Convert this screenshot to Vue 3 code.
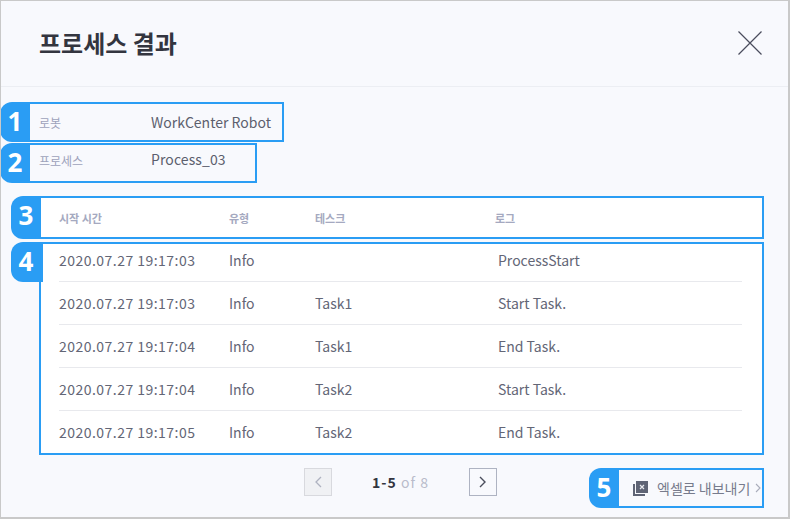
<script setup>
const rows = [
  { time: '2020.07.27 19:17:03', type: 'Info', task: '', log: 'ProcessStart' },
  { time: '2020.07.27 19:17:03', type: 'Info', task: 'Task1', log: 'Start Task.' },
  { time: '2020.07.27 19:17:04', type: 'Info', task: 'Task1', log: 'End Task.' },
  { time: '2020.07.27 19:17:04', type: 'Info', task: 'Task2', log: 'Start Task.' },
  { time: '2020.07.27 19:17:05', type: 'Info', task: 'Task2', log: 'End Task.' }
]
</script>

<template>
  <div class="dialog">
    <header class="head">
      <h1>프로세스 결과</h1>
      <svg class="close" width="24" height="24" viewBox="0 0 24 24">
        <path d="M0.5 0.5L23.5 23.5M23.5 0.5L0.5 23.5" stroke="#4a4d5c" stroke-width="1.2" fill="none" />
      </svg>
    </header>
    <section class="info">
      <div class="info-row first">
        <span class="badge">1</span>
        <span class="label">로봇</span>
        <span class="value">WorkCenter Robot</span>
      </div>
      <div class="info-row second">
        <span class="badge">2</span>
        <span class="label up">프로세스</span>
        <span class="value up">Process_03</span>
      </div>
    </section>
    <section class="table">
      <div class="thead">
        <span class="badge">3</span>
        <div class="cols">
          <span>시작 시간</span><span>유형</span><span>테스크</span><span>로그</span>
        </div>
      </div>
      <div class="tbody">
        <span class="badge over">4</span>
        <div v-for="(r, i) in rows" :key="i" class="row">
          <span class="time">{{ r.time }}</span><span>{{ r.type }}</span><span>{{ r.task }}</span><span class="log">{{ r.log }}</span>
        </div>
      </div>
    </section>
    <footer class="foot">
      <div class="pager">
        <button class="page off">
          <svg width="8" height="12" viewBox="0 0 8 12"><path d="M7 1L2 6l5 5" fill="none" stroke="#aeb2c0" stroke-width="1.3" /></svg>
        </button>
        <span class="count"><b>1-5</b> of 8</span>
        <button class="page">
          <svg width="8" height="12" viewBox="0 0 8 12"><path d="M1 1l5 5-5 5" fill="none" stroke="#4a4d5c" stroke-width="1.4" /></svg>
        </button>
      </div>
      <div class="export">
        <span class="badge">5</span>
        <svg class="xls" width="15" height="15" viewBox="0 0 15 15">
          <path d="M0 3h2v10h10v2H0z" fill="#5f6475" />
          <rect x="3" y="0" width="12" height="12" fill="#5f6475" />
          <path d="M7 4l4 4M11 4l-4 4" stroke="#e8e9ee" stroke-width="1.2" />
        </svg>
        <span class="export-text">엑셀로 내보내기</span>
        <svg width="6" height="10" viewBox="0 0 6 10"><path d="M1 1l4 4-4 4" fill="none" stroke="#a9adbb" stroke-width="1.1" /></svg>
      </div>
    </footer>
  </div>
</template>

<style>
html, body { margin: 0; padding: 0; }
</style>

<style scoped>
.dialog {
  width: 790px;
  height: 519px;
  box-sizing: border-box;
  border: 1px solid #c9c9c9;
  border-width: 1px 2px 2px 1px;
  background: #f8f9fd;
  font-family: "Noto Sans CJK KR", "Noto Sans", sans-serif;
  color: #5c5f6e;
  position: relative;
  overflow: hidden;
}
.head {
  height: 86px;
  box-sizing: border-box;
  border-bottom: 1px solid #eceef3;
  display: flex;
  align-items: center;
  justify-content: space-between;
  padding: 0 26px 0 38px;
}
.head h1 {
  margin: 0;
  font-size: 24px;
  font-weight: 700;
  color: #33353f;
  line-height: 1;
  position: relative;
  top: -1px;
}
.close { position: relative; top: -1px; }
.badge {
  position: absolute;
  left: -30px;
  top: -2px;
  width: 30px;
  height: 40px;
  background: #2a9df4;
  color: #fff;
  font: 700 26px/38px "Open Sans", "Noto Sans", sans-serif;
  text-align: center;
  border-radius: 12px 0 0 12px;
}
.info { margin: 15px 0 0 29px; display: flex; flex-direction: column; gap: 1px; }
.info-row {
  position: relative;
  height: 40px;
  box-sizing: border-box;
  border: 2px solid #2a9df4;
  border-left: 0;
  background: #f8f9fd;
  display: flex;
  align-items: center;
  padding-left: 9px;
}
.first { width: 254px; }
.second { width: 227px; }
.label { width: 112px; font-size: 12px; color: #9da2bb; }
.value { font-size: 14px; color: #5c5f6e; }
.up { position: relative; top: -3px; }
.second .value { top: -4px; letter-spacing: 0.1px; }
.table { margin: 13px 0 0 10px; width: 753px; }
.thead {
  position: relative;
  height: 43px;
  box-sizing: border-box;
  border: 2px solid #2a9df4;
  border-left: 0;
  margin-left: 30px;
  width: 723px;
  background: #fff;
  display: flex;
  align-items: center;
  padding-left: 18px;
}
.thead .badge { top: -2px; height: 43px; border-radius: 12px 0 0 12px; }
.cols {
  display: grid;
  grid-template-columns: 170px 86px 180px 1fr;
  width: 100%;
  font-size: 11px;
  font-weight: 700;
  color: #a5a9c0;
}
.tbody {
  position: relative;
  margin: 3px 0 0 28px;
  width: 725px;
  height: 213px;
  box-sizing: border-box;
  border: 2px solid #2a9df4;
  background: #fff;
  padding: 0 20px 0 18px;
}
.badge.over { left: -30px; border-radius: 12px 0 0 12px; width: 32px; padding-right: 2px; box-sizing: border-box; }
.row {
  display: grid;
  grid-template-columns: 170px 86px 183px 1fr;
  height: 43px;
  box-sizing: border-box;
  padding-top: 11px;
  line-height: 20px;
  border-bottom: 1px solid #e8e9ed;
  font-size: 14px;
  color: #636676;
}
.row:first-of-type { height: 38px; padding-top: 6px; }
.row:last-child { border-bottom: 0; }
.time { letter-spacing: 0.47px; }
.foot { position: relative; margin-top: 13px; height: 40px; }
.pager {
  position: absolute;
  left: 303px;
  top: 0;
  width: 193px;
  height: 28px;
  display: flex;
  align-items: center;
  justify-content: space-between;
}
.page {
  width: 28px;
  height: 28px;
  padding: 0;
  box-sizing: border-box;
  border: 1px solid #aeb3c2;
  background: #f8f9fd;
  display: flex;
  align-items: center;
  justify-content: center;
}
.page.off { background: #f0f1f4; border-color: #d8d9de; }
.count { font-size: 14px; color: #b9bccb; letter-spacing: 1.05px; margin-left: 0; }
.count b { color: #33353f; }
.export {
  position: absolute;
  left: 618px;
  top: 0;
  width: 145px;
  height: 40px;
  box-sizing: border-box;
  border: 2px solid #2a9df4;
  border-left: 0;
  background: #f8f9fd;
  display: flex;
  align-items: center;
  padding-left: 14px;
}
.export .badge { top: -2px; width: 30px; }
.xls { margin-right: 9px; }
.export-text { font-size: 14px; color: #777b8c; margin-right: 5px; }
</style>
